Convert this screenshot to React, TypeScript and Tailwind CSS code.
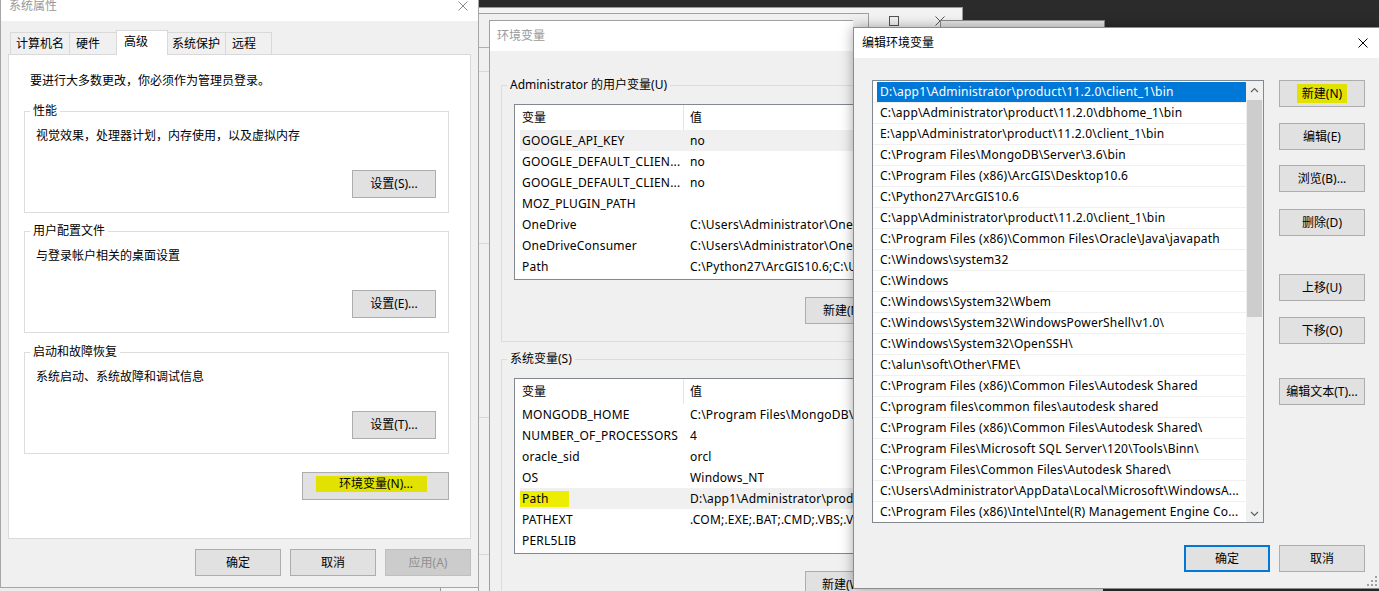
import React from "react";

type BtnProps = { children?: React.ReactNode; className?: string; disabled?: boolean; focused?: boolean };

function Btn({ children, className = "w-[86px] h-[27px]", disabled, focused }: BtnProps) {
  const look = disabled
    ? "bg-[#cccccc] border border-[#bfbfbf] text-[#8f8f8f]"
    : focused
    ? "bg-[#e1e1e1] border-2 border-[#0078d7]"
    : "bg-[#e1e1e1] border border-[#adadad]";
  return <div className={`flex items-center justify-center shrink-0 whitespace-nowrap ${look} ${className}`}>{children}</div>;
}

function CloseX({ className }: { className: string }) {
  return (
    <svg width="10" height="10" viewBox="0 0 10 10" className={className}>
      <path d="M0.5 0.5L9.5 9.5M9.5 0.5L0.5 9.5" stroke="currentColor" strokeWidth="1" fill="none" />
    </svg>
  );
}

function Group({ label, desc, btn, className = "" }: { label: string; desc: string; btn: string; className?: string }) {
  return (
    <fieldset className={`ml-[15px] mr-[21px] border border-[#dcdcdc] pb-[14px] ${className}`}>
      <legend className="ml-[5px] px-[3px] leading-[16px]">{label}</legend>
      <div className="pl-[11px] mt-[9px] leading-[16px]">{desc}</div>
      <div className="flex justify-end pr-[12px] mt-[26px]">
        <Btn className="w-[84px] h-[28px]">{btn}</Btn>
      </div>
    </fieldset>
  );
}

type Row = [string, string];

function ListView({ rows, hi, yellow }: { rows: Row[]; hi: number; yellow?: number }) {
  return (
    <div className="w-[566px] h-[176px] bg-white border border-[#828790] overflow-hidden">
      <div className="flex h-[25px]">
        <div className="w-[169px] h-full flex items-center pl-[7px] border-r border-[#e5e5e5]">变量</div>
        <div className="flex items-center pl-[6px]">值</div>
      </div>
      <div className="pl-[5px] tracking-[0.2px]">
        {rows.map(([k, v], i) => (
          <div key={i} className={`flex h-[21px] items-center whitespace-nowrap ${i === hi ? "bg-[#f0f0f0]" : ""}`}>
            <div className="w-[168px] pl-[2px] overflow-hidden">
              {i === yellow ? (
                <span className="inline-block h-[16px] leading-[16px] bg-[#eded00] -ml-[8px] pl-[8px] pr-[20px]">{k}</span>
              ) : (
                k
              )}
            </div>
            <div className="pl-[2px] overflow-hidden">{v}</div>
          </div>
        ))}
      </div>
    </div>
  );
}

const userRows: Row[] = [
  ["GOOGLE_API_KEY", "no"],
  ["GOOGLE_DEFAULT_CLIEN...", "no"],
  ["GOOGLE_DEFAULT_CLIEN...", "no"],
  ["MOZ_PLUGIN_PATH", ""],
  ["OneDrive", "C:\\Users\\Administrator\\OneDrive"],
  ["OneDriveConsumer", "C:\\Users\\Administrator\\OneDrive"],
  ["Path", "C:\\Python27\\ArcGIS10.6;C:\\Users\\Administrator\\AppData"],
];

const sysRows: Row[] = [
  ["MONGODB_HOME", "C:\\Program Files\\MongoDB\\Server\\3.6"],
  ["NUMBER_OF_PROCESSORS", "4"],
  ["oracle_sid", "orcl"],
  ["OS", "Windows_NT"],
  ["Path", "D:\\app1\\Administrator\\product\\11.2.0\\client_1\\bin;C:\\app"],
  ["PATHEXT", ".COM;.EXE;.BAT;.CMD;.VBS;.VBE;.JS;.JSE;.WSF;.WSH;.MSC"],
  ["PERL5LIB", ""],
];

const paths = [
  "D:\\app1\\Administrator\\product\\11.2.0\\client_1\\bin",
  "C:\\app\\Administrator\\product\\11.2.0\\dbhome_1\\bin",
  "E:\\app\\Administrator\\product\\11.2.0\\client_1\\bin",
  "C:\\Program Files\\MongoDB\\Server\\3.6\\bin",
  "C:\\Program Files (x86)\\ArcGIS\\Desktop10.6",
  "C:\\Python27\\ArcGIS10.6",
  "C:\\app\\Administrator\\product\\11.2.0\\client_1\\bin",
  "C:\\Program Files (x86)\\Common Files\\Oracle\\Java\\javapath",
  "C:\\Windows\\system32",
  "C:\\Windows",
  "C:\\Windows\\System32\\Wbem",
  "C:\\Windows\\System32\\WindowsPowerShell\\v1.0\\",
  "C:\\Windows\\System32\\OpenSSH\\",
  "C:\\alun\\soft\\Other\\FME\\",
  "C:\\Program Files (x86)\\Common Files\\Autodesk Shared",
  "C:\\program files\\common files\\autodesk shared",
  "C:\\Program Files (x86)\\Common Files\\Autodesk Shared\\",
  "C:\\Program Files\\Microsoft SQL Server\\120\\Tools\\Binn\\",
  "C:\\Program Files\\Common Files\\Autodesk Shared\\",
  "C:\\Users\\Administrator\\AppData\\Local\\Microsoft\\WindowsA...",
  "C:\\Program Files (x86)\\Intel\\Intel(R) Management Engine Co...",
];

function Chevron({ up }: { up?: boolean }) {
  return (
    <svg width="9" height="6" viewBox="0 0 9 6">
      <path d={up ? "M1 5L4.5 1.5L8 5" : "M1 1L4.5 4.5L8 1"} stroke="#606060" strokeWidth="1.2" fill="none" />
    </svg>
  );
}

function SystemProps() {
  return (
    <div className="absolute left-0 top-[-10px] w-[479px] h-[598px] bg-[#f0f0f0] border border-[#a6a6a6] flex flex-col">
      <div className="h-[30px] shrink-0 bg-white flex items-center justify-between pl-[8px] pr-[10px]">
        <span className="text-[#999999]">系统属性</span>
        <CloseX className="text-[#8a8a8a]" />
      </div>
      <div className="flex flex-col px-[7px] pt-[9px]">
        <div className="flex items-end h-[24px] pl-[2px]">
          <div className="w-[60px] h-[22px] border-t border-l border-r border-[#d9d9d9] flex items-center pl-[5px] pt-[1px]">计算机名</div>
          <div className="w-[48px] h-[22px] -ml-px border-t border-l border-r border-[#d9d9d9] flex items-center pl-[6px] pt-[1px]">硬件</div>
          <div className="relative z-10 w-[52px] h-[25px] -ml-px -mb-px bg-white border-t border-l border-r border-[#d9d9d9] flex items-center pl-[7px] pb-[2px]">高级</div>
          <div className="w-[59px] h-[22px] -ml-px border-t border-l border-r border-[#d9d9d9] flex items-center pl-[4px] pt-[1px]">系统保护</div>
          <div className="w-[47px] h-[22px] -ml-px border-t border-l border-r border-[#d9d9d9] flex items-center pl-[6px] pt-[1px]">远程</div>
        </div>
        <div className="h-[485px] bg-white border border-[#d9d9d9] flex flex-col">
          <div className="pl-[21px] mt-[18px]">要进行大多数更改，你必须作为管理员登录。</div>
          <Group className="mt-[14px]" label="性能" desc="视觉效果，处理器计划，内存使用，以及虚拟内存" btn="设置(S)..." />
          <Group className="mt-[10px]" label="用户配置文件" desc="与登录帐户相关的桌面设置" btn="设置(E)..." />
          <Group className="mt-[11px]" label="启动和故障恢复" desc="系统启动、系统故障和调试信息" btn="设置(T)..." />
          <div className="flex justify-end mt-[18px] mr-[21px]">
            <Btn className="w-[147px] h-[28px]">
              <span className="inline-block h-[16px] leading-[16px] bg-[#e2e200] pl-[23px] pr-[14px] -ml-[8px] -mt-[4px]">环境变量(N)...</span>
            </Btn>
          </div>
        </div>
        <div className="flex justify-end gap-[9px] mt-[10px]">
          <Btn>确定</Btn>
          <Btn>取消</Btn>
          <Btn disabled>应用(A)</Btn>
        </div>
      </div>
    </div>
  );
}

function EnvWindow() {
  return (
    <div className="absolute left-[489px] top-[20px] w-[364px] h-[600px] bg-[#f0f0f0] border-t border-l border-[#a0a0a0] overflow-hidden flex flex-col">
      <div className="h-[30px] shrink-0 bg-white flex items-center pl-[7px]">
        <span className="text-[#999999]">环境变量</span>
      </div>
      <div className="flex flex-col pl-[11px]">
        <fieldset className="mt-[26px] w-[592px] shrink-0 border border-[#dcdcdc] pb-[17px]">
          <legend className="ml-[5px] px-[3px] leading-[16px]">Administrator 的用户变量(U)</legend>
          <div className="pl-[12px] mt-[11px]">
            <ListView rows={userRows} hi={0} />
          </div>
          <div className="flex gap-[8px] pl-[303px] mt-[17px]">
            <Btn>新建(N)...</Btn>
          </div>
        </fieldset>
        <fieldset className="mt-[9px] w-[592px] shrink-0 border border-[#dcdcdc] pb-[17px]">
          <legend className="ml-[5px] px-[3px] leading-[16px]">系统变量(S)</legend>
          <div className="pl-[12px] mt-[11px]">
            <ListView rows={sysRows} hi={4} yellow={4} />
          </div>
          <div className="flex gap-[8px] pl-[303px] mt-[17px]">
            <Btn>新建(W)...</Btn>
          </div>
        </fieldset>
      </div>
    </div>
  );
}

function EditDialog() {
  return (
    <div className="absolute left-[853px] top-[27px] w-[527px] h-[562px] bg-[#f0f0f0] border border-[#8c8c8c] shadow-[0_0_12px_rgba(0,0,0,0.35)] flex flex-col">
      <div className="h-[30px] shrink-0 bg-white flex items-center justify-between pl-[8px] pr-[11px]">
        <span>编辑环境变量</span>
        <CloseX className="text-black" />
      </div>
      <div className="flex pl-[18px] pt-[22px]">
        <div className="w-[392px] h-[443px] bg-white border border-[#828790] flex overflow-hidden">
          <div className="flex-1 flex flex-col pt-[1px] min-w-0 tracking-[0.2px]">
            {paths.map((p, i) => (
              <div key={i} className="h-[21px] shrink-0 border-b border-[#f0f0f0]">
                <div className={`ml-[4px] h-[20px] flex items-center pl-[3px] whitespace-nowrap overflow-hidden ${i === 0 ? "bg-[#0078d7] text-white" : ""}`}>
                  {p}
                </div>
              </div>
            ))}
          </div>
          <div className="w-[17px] shrink-0 bg-[#f0f0f0] flex flex-col">
            <div className="h-[17px] flex items-center justify-center">
              <Chevron up />
            </div>
            <div className="mt-[2px] mx-[1px] h-[217px] bg-[#cdcdcd]" />
            <div className="flex-1" />
            <div className="h-[17px] flex items-center justify-center">
              <Chevron />
            </div>
          </div>
        </div>
        <div className="ml-[15px] flex flex-col">
          <Btn>
            <span className="inline-block h-[19px] leading-[19px] bg-[#e2e200] px-[5px]">新建(N)</span>
          </Btn>
          <Btn className="w-[86px] h-[27px] mt-[16px]">编辑(E)</Btn>
          <Btn className="w-[86px] h-[27px] mt-[15px]">浏览(B)...</Btn>
          <Btn className="w-[86px] h-[27px] mt-[17px]">删除(D)</Btn>
          <Btn className="w-[86px] h-[27px] mt-[38px]">上移(U)</Btn>
          <Btn className="w-[86px] h-[27px] mt-[16px]">下移(O)</Btn>
          <Btn className="w-[86px] h-[27px] mt-[34px]">编辑文本(T)...</Btn>
        </div>
      </div>
      <div className="flex justify-end gap-[9px] pr-[14px] mt-[22px]">
        <Btn focused>确定</Btn>
        <Btn>取消</Btn>
      </div>
      <div className="flex justify-end pr-[2px] mt-auto pb-[2px]">
        <svg width="10" height="10" viewBox="0 0 10 10">
          <g fill="#a0a0a0">
            <rect x="8" y="0" width="2" height="2" />
            <rect x="4" y="4" width="2" height="2" />
            <rect x="8" y="4" width="2" height="2" />
            <rect x="0" y="8" width="2" height="2" />
            <rect x="4" y="8" width="2" height="2" />
            <rect x="8" y="8" width="2" height="2" />
          </g>
        </svg>
      </div>
    </div>
  );
}

export default function App() {
  return (
    <div className="relative w-[1379px] h-[591px] overflow-hidden bg-[#2b2b2b] text-[12px] leading-[16px] text-black font-['Noto_Sans','Noto_Sans_CJK_SC',sans-serif]">
      {/* windows further back */}
      <div className="absolute left-0 top-[560px] w-[480px] h-[40px] bg-[#ececec]" />
      <div className="absolute left-[440px] top-[7px] w-[523px] h-[600px] bg-[#f3f3f3] border border-[#9a9a9a]">
        <div className="h-[26px] flex items-center justify-end pr-[17px] gap-[36px]">
          <div className="w-[10px] h-[10px] border border-[#555555]" />
          <CloseX className="text-[#555555]" />
        </div>
      </div>
      <div className="absolute left-[940px] top-[20px] w-[165px] h-[8px] bg-[#e6e6e6] border border-[#8a8a8a]" />
      <div className="absolute left-[478px] top-[13px] w-[391px] h-[600px] bg-[#f0f0f0] border border-[#a0a0a0] flex flex-col">
        <div className="h-[34px] border-b border-[#b0b0b0]" />
        <div className="h-[24px] border-b border-[#d8d8d8]" />
        <div className="h-[172px] border-b border-[#d8d8d8]" />
        <div className="h-[174px] border-b border-[#d8d8d8]" />
        <div className="h-[137px] border-b border-[#d8d8d8]" />
      </div>
      <div className="absolute left-[853px] top-[580px] w-[250px] h-[20px] bg-[#eeeeee]" />

      <SystemProps />
      <EnvWindow />
      <EditDialog />
    </div>
  );
}
